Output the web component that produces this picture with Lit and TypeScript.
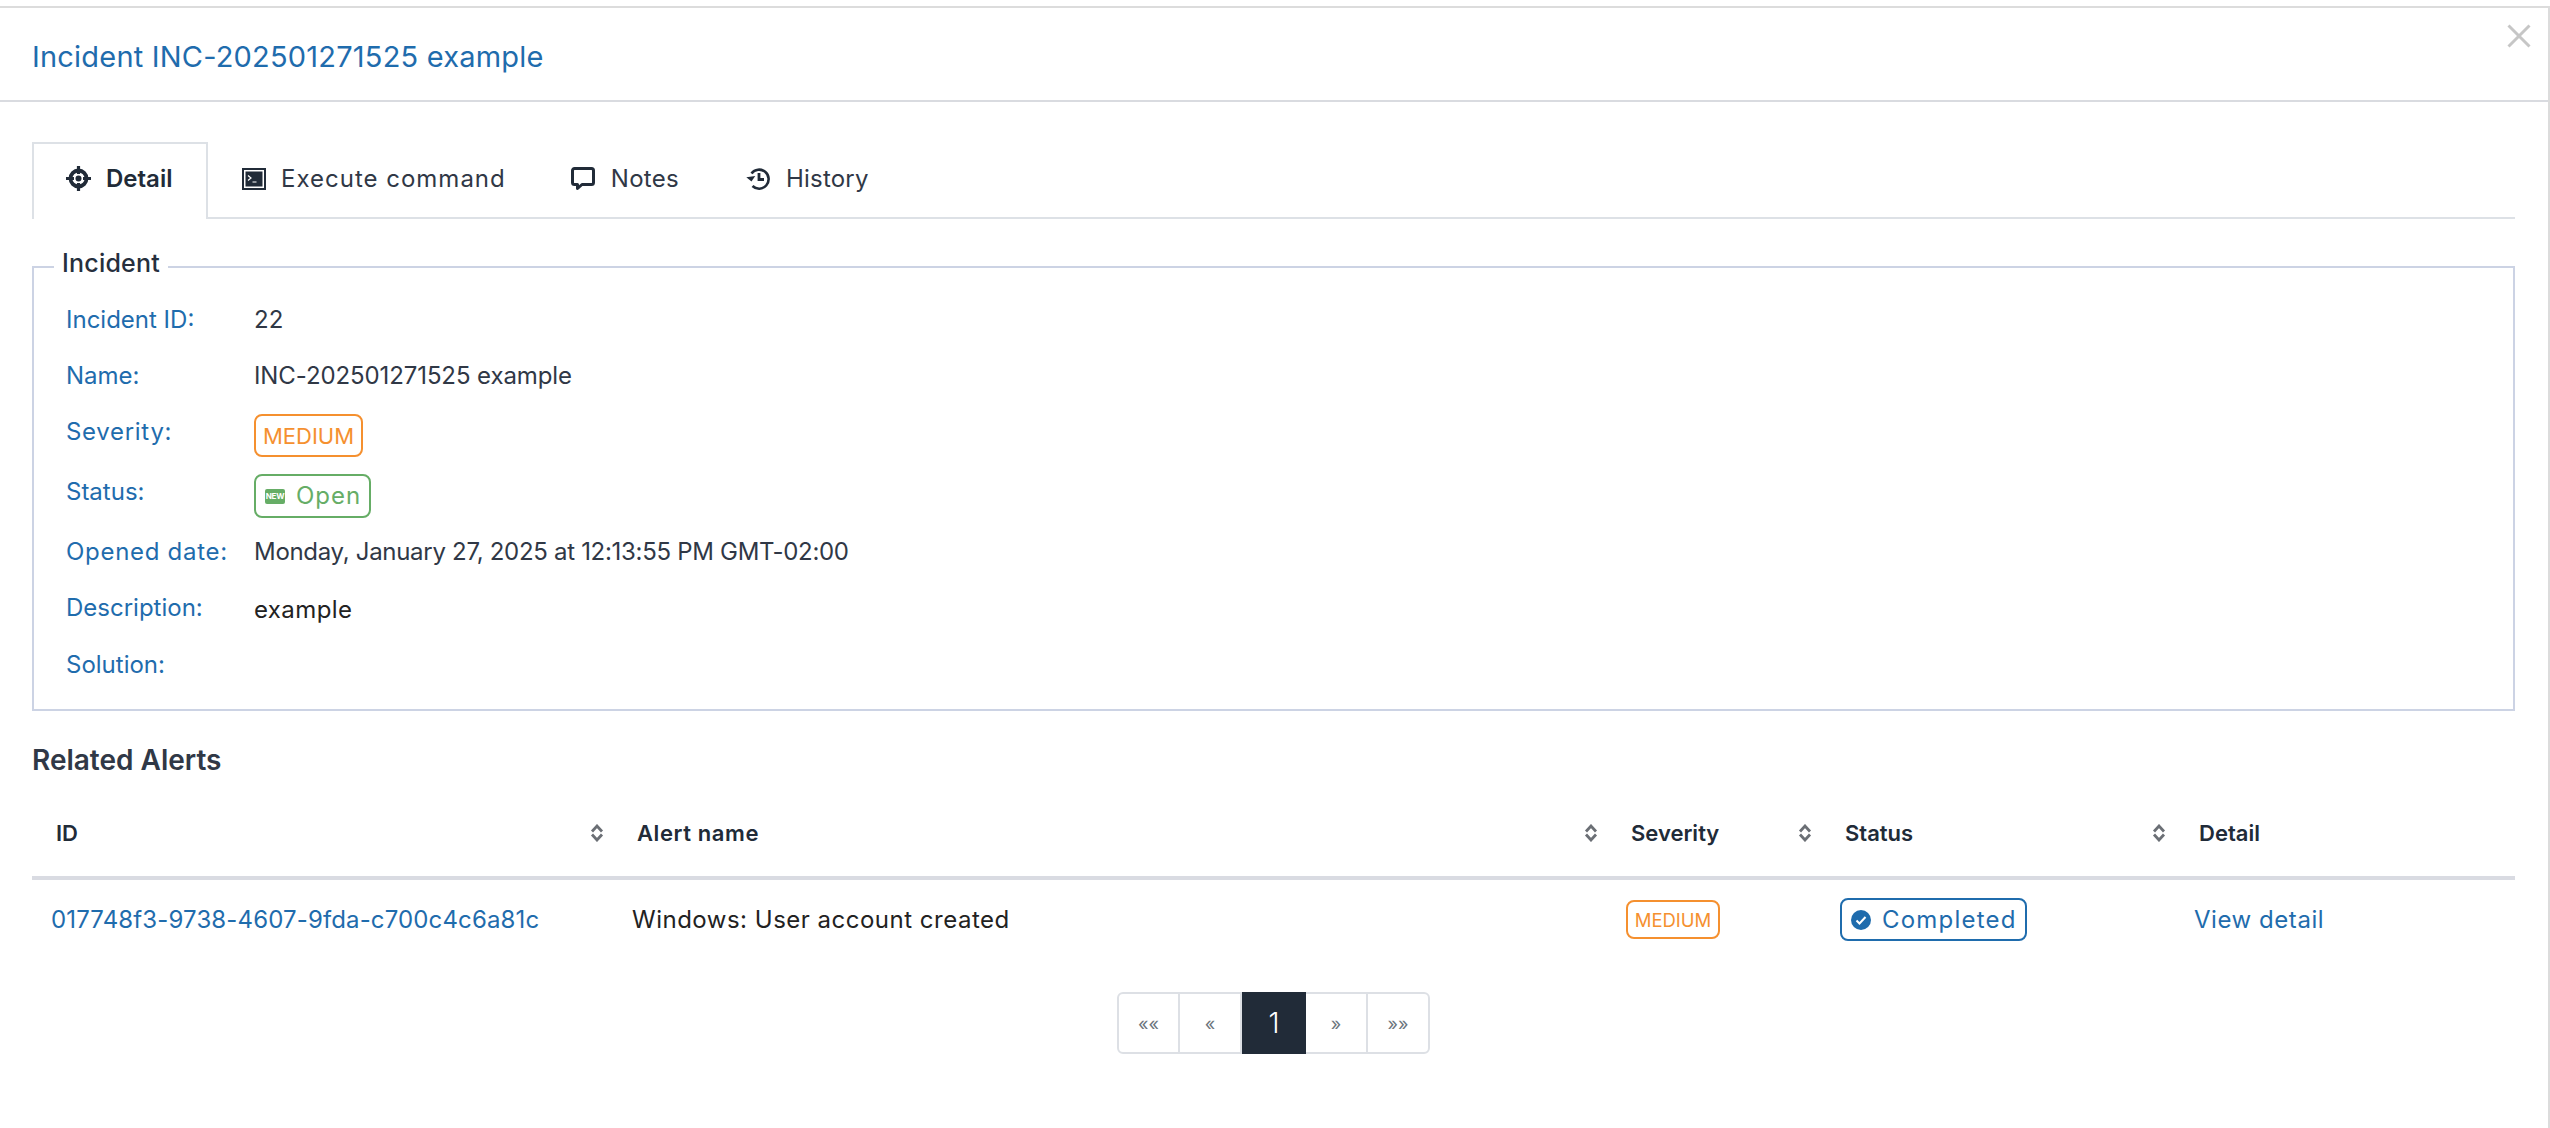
import { LitElement, html, css, svg } from "lit";
import { customElement } from "lit/decorators.js";

const sortIcon = html`<svg class="sort" viewBox="0 0 16 18" width="16" height="18"><path d="M3 7.500 8 2 13 7.500M3 10.500 8 16 13 10.500" fill="none" stroke="#6b6f75" stroke-width="2.800"/></svg>`;

const detailIcon = svg`<g fill="none" stroke="#212b38"><circle cx="12.500" cy="12.500" r="8" stroke-width="3.800"/><path d="M12.500 0v8M12.500 17v8M0 12.500h8M17 12.500h8" stroke-width="3.200"/></g><circle cx="12.500" cy="12.500" r="3" fill="#212b38"/>`;
const termIcon = svg`<rect x="1" y="1" width="22" height="20" fill="none" stroke="#212b38" stroke-width="2"/><rect x="3.500" y="3.500" width="17" height="15" fill="#212b38"/><path d="M6 7.500l3 2.500-3 2.500M10.500 14h4" fill="none" stroke="#fff" stroke-width="1.200"/>`;
const notesIcon = svg`<path d="M3.500 1.500h17a2 2 0 0 1 2 2v12a2 2 0 0 1-2 2H11l-4.500 4v-4H3.500a2 2 0 0 1-2-2v-12a2 2 0 0 1 2-2z" fill="none" stroke="#212b38" stroke-width="3" stroke-linejoin="round"/>`;
const historyIcon = svg`<path d="M5.500 6.500A9.500 9.500 0 1 1 6.500 19" fill="none" stroke="#212b38" stroke-width="2.600"/><path d="M0.500 9.500h9l-4.500 5z" fill="#212b38" transform="rotate(-8 5 11)"/><path d="M13 6v6.500h5" fill="none" stroke="#212b38" stroke-width="2.800"/>`;

@customElement("app-root")
export class AppRoot extends LitElement {
  static styles = css`
    :host { display: block; width: 2550px; height: 1128px; background: #fff; overflow: hidden;
      font-family: Inter, "Liberation Sans", sans-serif; font-size: 24px; color: #262f3d; }
    .modal { margin-top: 6px; height: 1122px; box-sizing: border-box; border-top: 2px solid #dcdcdc; border-right: 2px solid #dcdcdc; }
    .head { height: 94px; box-sizing: border-box; border-bottom: 2px solid #d9dbe0; padding-left: 32px;
      display: flex; justify-content: space-between; align-items: flex-start; }
    .title { font-size: 29px; line-height: 36px; margin-top: 31px; color: #1f6cad; letter-spacing: 0.2px; }
    .close { margin: 16px 17px 0 0; width: 24px; height: 24px; }
    .body { padding: 40px 33px 0 32px; }
    .tabs { display: flex; height: 77px; box-sizing: border-box; border-bottom: 2px solid #dde1e6; }
    .tab { display: flex; align-items: center; height: 75px; box-sizing: border-box; color: #303846; padding-bottom: 2px; }
    .tab svg { width: 24px; height: 24px; flex: none; }
    .tab.active { border: 2px solid #dde1e6; border-bottom: none; height: 77px; background: #fff; width: 176px;
      padding: 0 0 6px 32px; font-weight: 600; color: #212b38; gap: 15px; }
    .tab.active svg { width: 25px; height: 25px; }
    .t2 { margin-left: 34px; gap: 15px; letter-spacing: 1px; }
    .t3 { margin-left: 65px; gap: 16px; letter-spacing: 0.3px; }
    .t4 { margin-left: 67px; gap: 16px; letter-spacing: 0.2px; }
    fieldset { margin: 26px 0 0; border: 2px solid #ccd3e4; padding: 13px 32px 26px 32px; min-width: 0; }
    legend { margin-left: -12px; padding: 0 8px 8px; font-size: 25px; font-weight: 500; line-height: 36px; color: #262f3d; letter-spacing: 0.2px; }
    .row { display: flex; align-items: flex-start; line-height: 36px; margin-bottom: 20px; }
    .row.m21 { margin-bottom: 21px; }
    .row.m19 { margin-bottom: 19px; }
    .row.m17 { margin-bottom: 17px; }
    .row.m16 { margin-bottom: 16px; }
    .row.last { margin-bottom: 0; }
    .label { width: 188px; flex: none; color: #1f6cad; }
    .wide { letter-spacing: 0.7px; }
    .value { color: #303846; }
    .value.name { letter-spacing: -0.1px; }
    .value.date { letter-spacing: -0.3px; }
    .value.low { margin-top: 2px; color: #222; letter-spacing: 0.4px; }
    .badge { display: inline-flex; align-items: center; box-sizing: border-box; border: 2px solid; border-radius: 8px; }
    .orange { color: #f5902f; border-color: #f5902f; }
    .sev { height: 43px; width: 109px; justify-content: center; font-size: 22px; }
    .green { color: #66ad66; border-color: #66ad66; height: 44px; width: 117px; padding-left: 9px; gap: 11px; letter-spacing: 1px; }
    .new { width: 20px; height: 15px; border-radius: 2px; background: #66ad66; color: #fff; font-size: 8px; font-weight: 700;
      display: flex; align-items: center; justify-content: center; letter-spacing: -0.2px; }
    h2 { margin: 29px 0 0; font-size: 28px; font-weight: 600; line-height: 40px; color: #303846; }
    table { width: 100%; border-collapse: collapse; table-layout: fixed; margin-top: 10px; }
    th { height: 88px; box-sizing: border-box; padding: 0 0 0 24px; border-bottom: 4px solid #d9dbe2; font-size: 22px; font-weight: 600;
      color: #212b38; text-align: left; }
    .th { display: flex; align-items: center; justify-content: space-between; padding-right: 8px; }
    .th .sp { letter-spacing: 0.6px; }
    td { height: 79px; padding: 0 0 0 19px; color: #222; }
    td a { color: #1f6cad; text-decoration: none; }
    td a.id { letter-spacing: 0.14px; }
    td a.view { letter-spacing: 0.55px; }
    td .alert { letter-spacing: 0.5px; }
    .sort { display: block; flex: none; }
    .small { height: 39px; width: 94px; justify-content: center; font-size: 18.500px; }
    .blue { color: #1f6cad; border-color: #1f6cad; height: 43px; width: 187px; padding-left: 9px; gap: 11px; letter-spacing: 1.2px; }
    .pager { display: flex; justify-content: center; margin-top: 33px; }
    .pg { display: flex; height: 62px; box-sizing: border-box; border: 2px solid #dde0e5; border-radius: 6px; }
    .pg span { width: 62px; display: flex; align-items: center; justify-content: center; color: #6c757d; font-size: 18px; box-sizing: border-box; border-right: 2px solid #dde0e5; }
    .pg span:last-child { border-right: none; width: 60px; }
    .pg span:first-child { width: 61px; }
    .pg span.on { background: #212b38; color: #fff; font-size: 28px; font-weight: 300; width: 64px; border: none; margin: -2px 0; height: 62px; }
  `;

  render() {
    return html`<div class="modal">
      <div class="head">
        <div class="title">Incident INC-202501271525 example</div>
        <svg class="close" viewBox="0 0 24 24"><path d="M1.500 1.500l21 21M22.500 1.500l-21 21" stroke="#c6c6c6" stroke-width="3" fill="none"/></svg>
      </div>
      <div class="body">
        <div class="tabs">
          <div class="tab active"><svg viewBox="0 0 25 25">${detailIcon}</svg>Detail</div>
          <div class="tab t2"><svg viewBox="0 0 24 22">${termIcon}</svg>Execute command</div>
          <div class="tab t3"><svg viewBox="0 0 24 24">${notesIcon}</svg>Notes</div>
          <div class="tab t4"><svg viewBox="0 0 24 24">${historyIcon}</svg>History</div>
        </div>
        <fieldset>
          <legend>Incident</legend>
          <div class="row"><div class="label">Incident ID:</div><div class="value">22</div></div>
          <div class="row"><div class="label">Name:</div><div class="value name">INC-202501271525 example</div></div>
          <div class="row m17"><div class="label"><span class="wide">Severity:</span></div><div class="badge orange sev">MEDIUM</div></div>
          <div class="row m16"><div class="label">Status:</div><div class="badge green"><span class="new">NEW</span>Open</div></div>
          <div class="row"><div class="label"><span class="wide">Opened date:</span></div><div class="value date">Monday, January 27, 2025 at 12:13:55 PM GMT-02:00</div></div>
          <div class="row m19"><div class="label">Description:</div><div class="value low">example</div></div>
          <div class="row last"><div class="label">Solution:</div></div>
        </fieldset>
        <h2>Related Alerts</h2>
        <table>
          <colgroup><col style="width:581px"/><col style="width:994px"/><col style="width:214px"/><col style="width:354px"/><col/></colgroup>
          <thead><tr>
            <th><div class="th">ID ${sortIcon}</div></th>
            <th><div class="th"><span class="sp">Alert name</span> ${sortIcon}</div></th>
            <th><div class="th">Severity ${sortIcon}</div></th>
            <th><div class="th">Status ${sortIcon}</div></th>
            <th>Detail</th>
          </tr></thead>
          <tbody><tr>
            <td><a class="id">017748f3-9738-4607-9fda-c700c4c6a81c</a></td>
            <td><span class="alert">Windows: User account created</span></td>
            <td><div class="badge orange small">MEDIUM</div></td>
            <td><div class="badge blue">
              <svg width="20" height="20" viewBox="0 0 20 20"><circle cx="10" cy="10" r="10" fill="#1f6cad"/><path d="M5.500 10.500l3 3 6-6.500" stroke="#fff" stroke-width="2" fill="none"/></svg>
              Completed</div></td>
            <td><a class="view">View detail</a></td>
          </tr></tbody>
        </table>
        <div class="pager"><div class="pg"><span>««</span><span>«</span><span class="on">1</span><span>»</span><span>»»</span></div></div>
      </div>
    </div>`;
  }
}
